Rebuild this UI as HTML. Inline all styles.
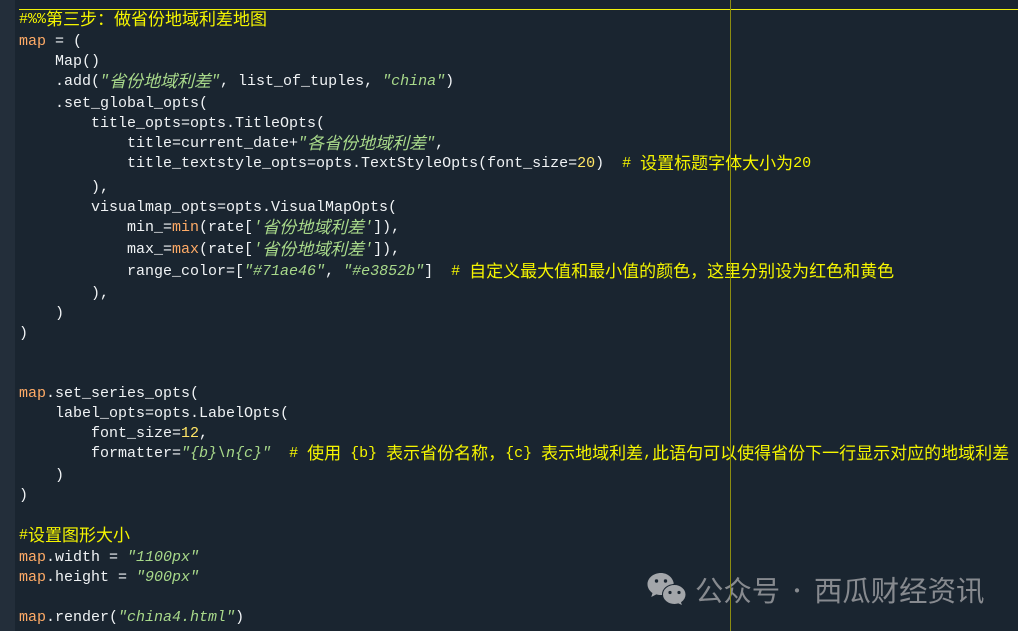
<!DOCTYPE html>
<html lang="zh">
<head>
<meta charset="utf-8">
<title>Code</title>
<style>
html,body{margin:0;padding:0;width:1018px;height:631px;overflow:hidden;background:#1a2530}
#g{position:absolute;left:0;top:0;width:15px;height:631px;background:#232e3a}
#t{position:absolute;left:19px;right:0;top:9px;height:1px;background:#f2f20a}
#v{position:absolute;left:730px;top:0;width:1px;height:631px;background:#8c8c10;z-index:5}
.l{position:absolute;left:19px;height:20px;margin-top:1px;white-space:pre;font:15px/20px "Liberation Mono",monospace;color:#f0f3f5}
.c{font-family:"Noto Sans CJK SC","WenQuanYi Zen Hei",sans-serif;font-size:17px;line-height:0;position:relative;top:2px}
.y{color:#f5f500}
.o{color:#ffab66}
.s{color:#a8d98a;font-style:italic}
.n{color:#ffe566}
.wm{position:absolute;top:573px;height:34px;font:28.4px/34px "Noto Sans CJK SC",sans-serif;color:#878a8f;white-space:pre;z-index:4}
#ic{position:absolute;left:646px;top:572px;z-index:4}
</style>
</head>
<body>
<div id="g"></div>
<div id="t"></div>
<div id="v"></div>
<div class="l y" style="top:9px">#%%<span class="c">第三步：做省份地域利差地图</span></div>
<div class="l" style="top:31px"><span class="o">map</span> = (</div>
<div class="l" style="top:51px">    Map()</div>
<div class="l" style="top:71px">    .add(<span class="s">"<span class="c">省份地域利差</span>"</span>, list_of_tuples, <span class="s">"china"</span>)</div>
<div class="l" style="top:93px">    .set_global_opts(</div>
<div class="l" style="top:113px">        title_opts=opts.TitleOpts(</div>
<div class="l" style="top:133px">            title=current_date+<span class="s">"<span class="c">各省份地域利差</span>"</span>,</div>
<div class="l" style="top:153px">            title_textstyle_opts=opts.TextStyleOpts(font_size=<span class="n">20</span>)  <span class="y"># <span class="c">设置标题字体大小为</span>20</span></div>
<div class="l" style="top:177px">        ),</div>
<div class="l" style="top:197px">        visualmap_opts=opts.VisualMapOpts(</div>
<div class="l" style="top:217px">            min_=<span class="o">min</span>(rate[<span class="s">'<span class="c">省份地域利差</span>'</span>]),</div>
<div class="l" style="top:239px">            max_=<span class="o">max</span>(rate[<span class="s">'<span class="c">省份地域利差</span>'</span>]),</div>
<div class="l" style="top:261px">            range_color=[<span class="s">"#71ae46"</span>, <span class="s">"#e3852b"</span>]  <span class="y"># <span class="c">自定义最大值和最小值的颜色，这里分别设为红色和黄色</span></span></div>
<div class="l" style="top:283px">        ),</div>
<div class="l" style="top:303px">    )</div>
<div class="l" style="top:323px">)</div>
<div class="l" style="top:383px"><span class="o">map</span>.set_series_opts(</div>
<div class="l" style="top:403px">    label_opts=opts.LabelOpts(</div>
<div class="l" style="top:423px">        font_size=<span class="n">12</span>,</div>
<div class="l" style="top:443px">        formatter=<span class="s">"{b}\n{c}"</span>  <span class="y"># <span class="c">使用</span> {b} <span class="c">表示省份名称，</span>{c} <span class="c">表示地域利差</span>,<span class="c">此语句可以使得省份下一行显示对应的地域利差</span></span></div>
<div class="l" style="top:465px">    )</div>
<div class="l" style="top:485px">)</div>
<div class="l y" style="top:525px">#<span class="c">设置图形大小</span></div>
<div class="l" style="top:547px"><span class="o">map</span>.width = <span class="s">"1100px"</span></div>
<div class="l" style="top:567px"><span class="o">map</span>.height = <span class="s">"900px"</span></div>
<div class="l" style="top:607px"><span class="o">map</span>.render(<span class="s">"china4.html"</span>)</div>
<svg id="ic" width="42" height="34" viewBox="0 0 42 34">
<path d="M15 1C7.500 1 1.500 6 1.500 12.200c0 3.600 2 6.700 5 8.800L5.300 25l5-2.600c1.500.4 3 .6 4.700.6.600 0 1.200 0 1.800-.1C21 15 26 13 27.800 11.500 26.800 5.500 21.500 1 15 1z" fill="#a3a6aa"/>
<path d="M28.500 12.500C21.700 12.500 16.500 17 16.500 22.500S21.700 32.500 28.500 32.500c1.400 0 2.700-.2 3.900-.6l4.300 2.100-1.100-3.600c2.700-1.900 4.400-4.700 4.400-7.900 0-5.500-5.300-10-11.500-10z" fill="#a3a6aa" stroke="#1a2530" stroke-width="1"/>
<circle cx="10.500" cy="9" r="1.700" fill="#1a2530"/><circle cx="19.500" cy="9" r="1.700" fill="#1a2530"/>
<circle cx="24" cy="20.500" r="1.600" fill="#1a2530"/><circle cx="33" cy="20.500" r="1.600" fill="#1a2530"/>
</svg>
<div class="wm" style="left:695px">公众号</div>
<div class="wm" style="left:787px;font-size:20px">·</div>
<div class="wm" style="left:814px">西瓜财经资讯</div>
</body>
</html>
